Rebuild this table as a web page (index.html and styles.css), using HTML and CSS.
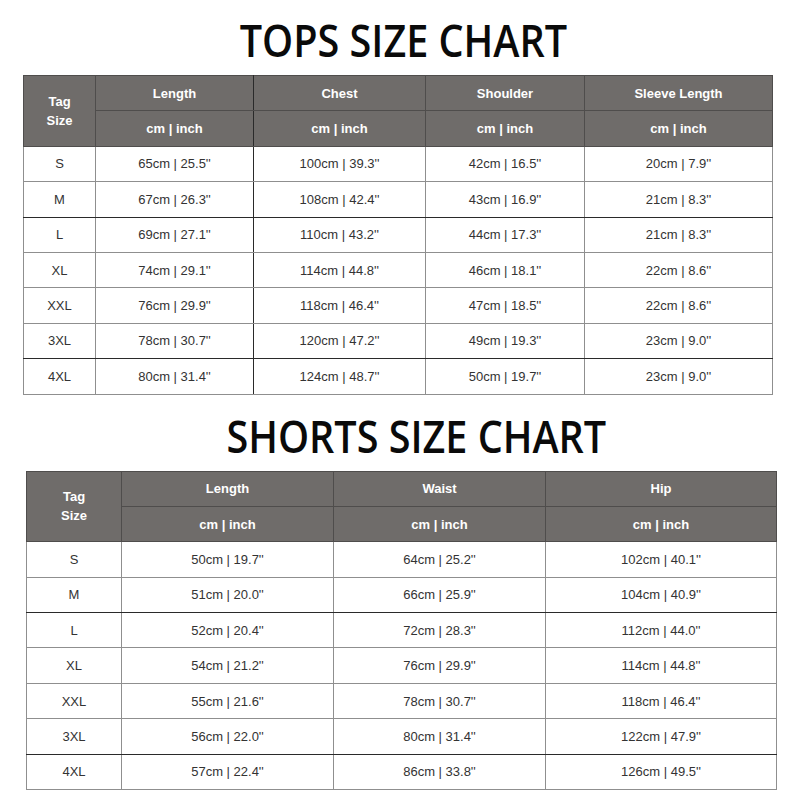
FILE: index.html
```html
<!DOCTYPE html>
<html>
<head>
<meta charset="utf-8">
<link rel="stylesheet" href="styles.css">
</head>
<body>
<section class="chart chart-tops">
  <h1 class="title">TOPS SIZE CHART</h1>
  <table class="sizes tops">
    <colgroup>
      <col style="width:72px"><col style="width:158px"><col style="width:172px"><col style="width:159px"><col style="width:188px">
    </colgroup>
    <thead>
      <tr>
        <th rowspan="2" class="tag">Tag<br>Size</th>
        <th class="split">Length</th><th>Chest</th><th>Shoulder</th><th>Sleeve Length</th>
      </tr>
      <tr>
        <th class="split">cm | inch</th><th>cm | inch</th><th>cm | inch</th><th>cm | inch</th>
      </tr>
    </thead>
    <tbody>
      <tr><td>S</td><td class="split">65cm | 25.5''</td><td>100cm | 39.3''</td><td>42cm | 16.5''</td><td>20cm | 7.9''</td></tr>
      <tr class="break"><td>M</td><td class="split">67cm | 26.3''</td><td>108cm | 42.4''</td><td>43cm | 16.9''</td><td>21cm | 8.3''</td></tr>
      <tr><td>L</td><td class="split">69cm | 27.1''</td><td>110cm | 43.2''</td><td>44cm | 17.3''</td><td>21cm | 8.3''</td></tr>
      <tr><td>XL</td><td class="split">74cm | 29.1''</td><td>114cm | 44.8''</td><td>46cm | 18.1''</td><td>22cm | 8.6''</td></tr>
      <tr><td>XXL</td><td class="split">76cm | 29.9''</td><td>118cm | 46.4''</td><td>47cm | 18.5''</td><td>22cm | 8.6''</td></tr>
      <tr class="break"><td>3XL</td><td class="split">78cm | 30.7''</td><td>120cm | 47.2''</td><td>49cm | 19.3''</td><td>23cm | 9.0''</td></tr>
      <tr><td>4XL</td><td class="split">80cm | 31.4''</td><td>124cm | 48.7''</td><td>50cm | 19.7''</td><td>23cm | 9.0''</td></tr>
    </tbody>
  </table>
</section>
<section class="chart chart-shorts">
  <h1 class="title">SHORTS SIZE CHART</h1>
  <table class="sizes shorts">
    <colgroup>
      <col style="width:95px"><col style="width:212px"><col style="width:212px"><col style="width:231px">
    </colgroup>
    <thead>
      <tr>
        <th rowspan="2" class="tag">Tag<br>Size</th>
        <th>Length</th><th>Waist</th><th>Hip</th>
      </tr>
      <tr>
        <th>cm | inch</th><th>cm | inch</th><th>cm | inch</th>
      </tr>
    </thead>
    <tbody>
      <tr><td>S</td><td>50cm | 19.7''</td><td>64cm | 25.2''</td><td>102cm | 40.1''</td></tr>
      <tr class="break"><td>M</td><td>51cm | 20.0''</td><td>66cm | 25.9''</td><td>104cm | 40.9''</td></tr>
      <tr><td>L</td><td>52cm | 20.4''</td><td>72cm | 28.3''</td><td>112cm | 44.0''</td></tr>
      <tr><td>XL</td><td>54cm | 21.2''</td><td>76cm | 29.9''</td><td>114cm | 44.8''</td></tr>
      <tr><td>XXL</td><td>55cm | 21.6''</td><td>78cm | 30.7''</td><td>118cm | 46.4''</td></tr>
      <tr class="break"><td>3XL</td><td>56cm | 22.0''</td><td>80cm | 31.4''</td><td>122cm | 47.9''</td></tr>
      <tr><td>4XL</td><td>57cm | 22.4''</td><td>86cm | 33.8''</td><td>126cm | 49.5''</td></tr>
    </tbody>
  </table>
</section>
</body>
</html>
```
FILE: styles.css
```css
html, body {
  margin: 0;
  padding: 0;
  background: #ffffff;
}
body {
  width: 800px;
  height: 800px;
  overflow: hidden;
  font-family: "Liberation Sans", Arial, sans-serif;
}
.chart {
  display: flex;
  flex-direction: column;
}
.title {
  margin: 0;
  font-family: "Open Sans", "Noto Sans", sans-serif;
  font-weight: 600;
  font-size: 46px;
  line-height: 1;
  letter-spacing: 0;
  color: #0a0a0a;
  text-align: center;
  transform: scaleX(0.86);
}
.chart-tops .title {
  height: 75px;
  padding-top: 16px;
  box-sizing: border-box;
  padding-left: 8px;
}
.chart-tops .sizes {
  margin-left: 23px;
}
.chart-shorts .title {
  height: 76px;
  padding-top: 17px;
  box-sizing: border-box;
  padding-left: 38px;
}
.chart-shorts .sizes {
  margin-left: 26px;
}
.sizes {
  border-collapse: collapse;
  table-layout: fixed;
  border: 1.5px solid #3a3a3a;
}
.tops { width: 749px; }
.shorts { width: 750px; }
.sizes th,
.sizes td {
  border: 1px solid #8f8f8f;
  padding: 0;
  text-align: center;
  vertical-align: middle;
  height: 34.4px;
}
.sizes th {
  background: #6f6c6a;
  color: #ffffff;
  font-weight: 700;
  font-size: 13px;
  border-color: #4f4d4c;
}
.sizes th.tag {
  line-height: 19px;
}
.sizes td {
  color: #333333;
  font-size: 13px;
}
.sizes tr.break td {
  border-bottom: 1.5px solid #2a2a2a;
}
.sizes .split {
  border-right: 1.5px solid #2a2a2a;
}
```
